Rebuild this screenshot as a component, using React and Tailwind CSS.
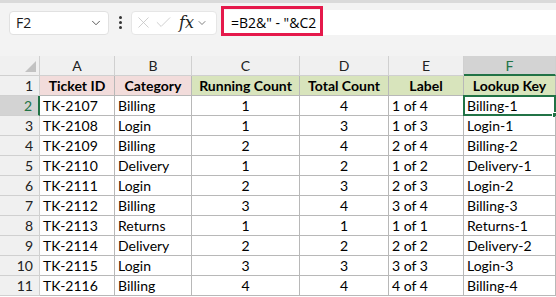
import { ChevronDown, X, Check } from 'lucide-react'

const rows = [
    ['TK-2107', 'Billing', 1, 4],
    ['TK-2108', 'Login', 1, 3],
    ['TK-2109', 'Billing', 2, 4],
    ['TK-2110', 'Delivery', 1, 2],
    ['TK-2111', 'Login', 2, 3],
    ['TK-2112', 'Billing', 3, 4],
    ['TK-2113', 'Returns', 1, 1],
    ['TK-2114', 'Delivery', 2, 2],
    ['TK-2115', 'Login', 3, 3],
    ['TK-2116', 'Billing', 4, 4],
]

const cols = ['A', 'B', 'C', 'D', 'E', 'F']
const grid = 'grid grid-cols-[40px_75px_77px_108px_89px_75px_92px]'
const cell = 'h-[20px] border-r border-b border-[#b8b8b8] flex items-center text-[14px] text-black leading-none overflow-hidden whitespace-nowrap'

const FormulaBar = () => (
    <div className="h-[42px] bg-[#f3f3f3] border-t-[3px] border-[#dadada] flex items-center font-['Open_Sans',sans-serif]">
        <div className="ml-[9px] w-[100px] h-[24px] bg-white border border-[#e1e1e1] rounded-[4px] flex items-center justify-between pl-[6px] pr-[5px]">
            <span className="text-[14px] text-[#1a1a1a]">F2</span>
            <ChevronDown size={14} strokeWidth={1.5} className="text-[#444]" />
        </div>
        <div className="ml-[8px] w-[6px] flex flex-col items-center gap-[2px]">
            <span className="w-[3px] h-[3px] rounded-full bg-[#333]" />
            <span className="w-[3px] h-[3px] rounded-full bg-[#333]" />
            <span className="w-[3px] h-[3px] rounded-full bg-[#333]" />
        </div>
        <div className="ml-[8px] w-[86px] h-[24px] bg-white border border-[#e6e6e6] rounded-[4px] flex items-center pl-[2px]">
            <X size={19} strokeWidth={1} className="text-[#c4c4c4]" />
            <Check size={19} strokeWidth={1} className="ml-[1px] text-[#c4c4c4]" />
            <span className="ml-[6px] font-['DejaVu_Serif',serif] italic text-[16px] text-[#222] leading-none">fx</span>
            <ChevronDown size={12} strokeWidth={1.5} className="ml-[2px] text-[#555]" />
        </div>
        <div className="ml-[4px] flex-1 h-[25px] bg-white flex items-center relative">
            <div className="absolute left-0 top-[-4px] w-[102px] h-[30px] border-[3px] border-[#e5194b]" />
            <span className="ml-[10px] text-[14px] text-black">=B2&amp;" - "&amp;C2</span>
        </div>
    </div>
)

export default () => {
    return (
        <div className="w-[556px] h-[297px] overflow-hidden bg-white font-['Lato',sans-serif]">
            <FormulaBar />
            <div className="h-[14px] bg-[#f3f3f3]" />
            <div className={grid + ' bg-[#f0f0f0]'}>
                <div className="h-[20px] border-r border-b border-[#d0d0d0] relative">
                    <div className="absolute right-[3px] bottom-[3px] w-0 h-0 border-l-[11px] border-l-transparent border-b-[11px] border-b-[#c2c2c2]" />
                </div>
                {cols.map((c) =>
                    c === 'F' ? (
                        <div key={c} className="h-[20px] bg-[#d3d3d3] border-r border-[#d0d0d0] border-b-2 border-b-[#217346] flex items-center justify-center text-[14px] text-[#217346]">{c}</div>
                    ) : (
                        <div key={c} className="h-[20px] border-r border-b border-[#d0d0d0] flex items-center justify-center text-[14px] text-[#222]">{c}</div>
                    )
                )}
            </div>
            <div className={grid}>
                <div className="h-[20px] bg-[#f0f0f0] border-r border-b border-[#d0d0d0] flex items-center justify-end pr-[6px] text-[14px] text-[#222]">1</div>
                <div className={cell + ' bg-[#f2dcdb] justify-center font-bold'}>Ticket ID</div>
                <div className={cell + ' bg-[#f2dcdb] justify-center font-bold'}>Category</div>
                <div className={cell + ' bg-[#d8e4bc] justify-center font-bold'}>Running Count</div>
                <div className={cell + ' bg-[#d8e4bc] justify-center font-bold'}>Total Count</div>
                <div className={cell + ' bg-[#d8e4bc] justify-center font-bold'}>Label</div>
                <div className={cell + ' bg-[#d8e4bc] justify-center font-bold'}>Lookup Key</div>
                {rows.map(([id, cat, run, total], i) => {
                    const n = i + 2
                    const sel = n === 2
                    return [
                        <div key={'h' + n} className={'h-[20px] flex items-center justify-end pr-[6px] text-[14px] ' + (sel ? 'bg-[#d3d3d3] text-[#217346] border-r-2 border-r-[#217346] border-b border-b-[#d0d0d0]' : 'bg-[#f0f0f0] text-[#222] border-r border-b border-[#d0d0d0]')}>{n}</div>,
                        <div key={'a' + n} className={cell + ' pl-[3px]'}>{id}</div>,
                        <div key={'b' + n} className={cell + ' pl-[3px]'}>{cat}</div>,
                        <div key={'c' + n} className={cell + ' justify-center'}>{run}</div>,
                        <div key={'d' + n} className={cell + ' justify-center'}>{total}</div>,
                        <div key={'e' + n} className={cell + ' pl-[3px]'}>{run} of {total}</div>,
                        <div key={'f' + n} className={cell + ' pl-[3px] relative overflow-visible'}>
                            {cat}-{run}
                            {sel && (
                                <>
                                    <div className="absolute left-[-1px] top-[-1px] right-[-1px] bottom-[-1px] border-2 border-[#217346]" />
                                    <div className="absolute right-[-3px] bottom-[-3px] w-[6px] h-[6px] bg-[#217346] border border-white" />
                                </>
                            )}
                        </div>,
                    ]
                })}
            </div>
        </div>
    )
}
